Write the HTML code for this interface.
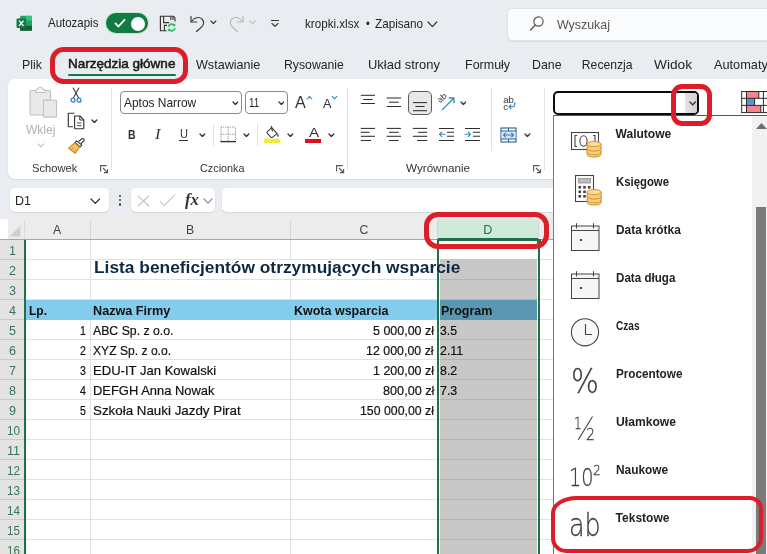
<!DOCTYPE html><html lang="pl"><head><meta charset="utf-8"><title>kropki.xlsx - Excel</title><style>

html,body{margin:0;padding:0;background:#fff;}
#app{position:relative;width:767px;height:554px;overflow:hidden;background:#e9ecf0;font-family:"Liberation Sans",sans-serif;}
.sec{position:absolute;left:0;top:0;width:767px;height:554px;pointer-events:none;will-change:transform;}
.b{position:absolute;box-sizing:border-box;display:block;}
.t{position:absolute;white-space:pre;line-height:1;transform-origin:0 0;font-family:"Liberation Sans",sans-serif;}

</style></head><body><div id="app">
<div class="sec" id="titlebar">
<div class="b" style="left:0px;top:0px;width:767px;height:47px;background:#e9ecf0;"></div>
<svg class="b" style="left:15.6px;top:15.3px;" width="16.8" height="16.6" viewBox="0 0 18 19">
<rect x="4" y="1" width="14" height="17" rx="1.5" fill="#21a366"/>
<rect x="11" y="1" width="7" height="5.7" fill="#33c481"/>
<rect x="4" y="6.7" width="7" height="5.6" fill="#107c41"/>
<rect x="11" y="6.7" width="7" height="5.6" fill="#21a366"/>
<rect x="4" y="12.3" width="14" height="5.7" fill="#185c37"/>
<rect x="0" y="4" width="11" height="11" rx="1.2" fill="#107c41"/>
<path d="M3 6.5 L8 12.5 M8 6.5 L3 12.5" stroke="#fff" stroke-width="1.6" fill="none"/>
</svg>
<span class="t" id="t0" style="top:18.33px;font-size:11.9px;color:#242424;left:48.2px;transform:scaleX(0.9649);">Autozapis</span>
<div class="b" style="left:105.6px;top:12.8px;width:42.6px;height:20px;background:#107c41;border-radius:10px;box-shadow:0 0 0 0.8px #bfe6d0;"></div>
<div class="b" style="left:131px;top:16.5px;width:14px;height:14px;background:#fff;border-radius:7px;"></div>
<svg class="b" style="left:114px;top:18px;" width="12" height="11" viewBox="0 0 12 11"><path d="M1.5 5.5 L4.5 8.5 L10.5 1.8" fill="none" stroke="#fff" stroke-width="1.8" stroke-linecap="round" stroke-linejoin="round"/></svg>
<svg class="b" style="left:159px;top:14px;" width="19" height="19" viewBox="0 0 19 19">
<path d="M16 7.6 V3.8 L14.4 2.2 H1.4 V16.7 H7.6" fill="none" stroke="#333" stroke-width="1.15" stroke-linejoin="round"/>
<path d="M4.6 2.2 V8.6 H10.2 M11.8 2.4 V6 M14 2.6 V6" fill="none" stroke="#333" stroke-width="1.1"/>
<path d="M5.4 16.7 V11.4 H8" fill="none" stroke="#333" stroke-width="1.1"/>
<circle cx="12.7" cy="13.5" r="4.4" fill="#d9f1e3"/>
<path d="M9.5 12.8 A3.3 3.3 0 0 1 15.4 11.4 M15.9 14.2 A3.3 3.3 0 0 1 10 15.6" fill="none" stroke="#37b26c" stroke-width="1.7"/>
<path d="M16.6 9.6 L16 12.4 L13.4 11.4 Z M8.8 17.4 L9.4 14.6 L12 15.6 Z" fill="#37b26c"/>
</svg>
<svg class="b" style="left:188px;top:13px;" width="19" height="20" viewBox="0 0 19 20">
<path d="M3 3.2 V9 H8.8" fill="none" stroke="#3b3b3b" stroke-width="1.15" stroke-linecap="round" stroke-linejoin="round"/>
<path d="M3.3 8.7 C6 4.5 11 3.2 14 6 C17 9 15.5 12.5 13 14.5 L8.5 18.5" fill="none" stroke="#3b3b3b" stroke-width="1.15" stroke-linecap="round"/>
</svg>
<svg class="b" style="left:210.29999999999998px;top:20.2px;" width="6.8" height="4.6" viewBox="0 0 6.8 4.6"><path d="M1 1 L3.4 3.6 L5.8 1" fill="none" stroke="#333" stroke-width="1.15" stroke-linecap="round" stroke-linejoin="round"/></svg>
<svg class="b" style="left:227px;top:13px;" width="19" height="20" viewBox="0 0 19 20">
<path d="M16 3.2 V9 H10.2" fill="none" stroke="#b4b6bb" stroke-width="1.15" stroke-linecap="round" stroke-linejoin="round"/>
<path d="M15.7 8.7 C13 4.5 8 3.2 5 6 C2 9 3.5 12.5 6 14.5 L10.5 18.5" fill="none" stroke="#b4b6bb" stroke-width="1.15" stroke-linecap="round"/>
</svg>
<svg class="b" style="left:249.0px;top:20.1px;" width="7" height="4.8" viewBox="0 0 7 4.8"><path d="M1 1 L3.5 3.8 L6 1" fill="none" stroke="#c4c6ca" stroke-width="1.3" stroke-linecap="round" stroke-linejoin="round"/></svg>
<svg class="b" style="left:270px;top:18px;" width="10" height="10" viewBox="0 0 10 10"><path d="M1.5 2.5 H8.5" stroke="#333" stroke-width="1.1" stroke-linecap="round"/><path d="M2 5.5 L5 8.3 L8 5.5" fill="none" stroke="#333" stroke-width="1.1" stroke-linecap="round" stroke-linejoin="round"/></svg>
<span class="t" id="t1" style="top:19.33px;font-size:11.9px;color:#242424;left:304.6px;transform:scaleX(0.9784);">kropki.xlsx</span>
<span class="t" id="t2" style="top:19.33px;font-size:11.9px;color:#242424;left:365.8px;transform:scaleX(0.9109);">•</span>
<span class="t" id="t3" style="top:19.33px;font-size:11.9px;color:#242424;left:374.5px;transform:scaleX(0.9832);">Zapisano</span>
<svg class="b" style="left:427.1px;top:21.3px;" width="10.8" height="6.6" viewBox="0 0 10.8 6.6"><path d="M1 1 L5.4 5.6 L9.8 1" fill="none" stroke="#333" stroke-width="1.2" stroke-linecap="round" stroke-linejoin="round"/></svg>
<div class="b" style="left:507px;top:8px;width:270px;height:33px;background:#fafbfc;border:1px solid #dfe1e6;border-radius:5px;box-shadow:0 1px 1px rgba(0,0,0,.08);"></div>
<svg class="b" style="left:529px;top:15px;" width="16" height="17" viewBox="0 0 16 17"><circle cx="9.5" cy="6.5" r="4.6" fill="none" stroke="#555" stroke-width="1.2"/><path d="M6.2 10 L1.5 15" stroke="#555" stroke-width="1.3" stroke-linecap="round"/></svg>
<span class="t" id="t4" style="top:18.90px;font-size:12.4px;color:#555;left:557px;">Wyszukaj</span>
</div>
<div class="sec" id="tabs">
<div class="b" style="left:0px;top:47px;width:767px;height:34px;background:#e9ecf0;"></div>
<span class="t" id="t5" style="top:59.07px;font-size:12.2px;color:#242424;left:22px;transform:scaleX(1.0183);">Plik</span>
<span class="t" id="t6" style="top:58.43px;font-size:12.6px;color:#1a1a1a;left:67.9px;transform:scaleX(1.0728);-webkit-text-stroke:0.5px #1a1a1a;">Narzędzia główne</span>
<span class="t" id="t7" style="top:59.07px;font-size:12.2px;color:#242424;left:196.3px;transform:scaleX(1.0319);">Wstawianie</span>
<span class="t" id="t8" style="top:59.07px;font-size:12.2px;color:#242424;left:283.5px;transform:scaleX(1.0046);">Rysowanie</span>
<span class="t" id="t9" style="top:59.07px;font-size:12.2px;color:#242424;left:367.8px;transform:scaleX(1.0630);">Układ strony</span>
<span class="t" id="t10" style="top:59.07px;font-size:12.2px;color:#242424;left:464.5px;transform:scaleX(1.0246);">Formuły</span>
<span class="t" id="t11" style="top:59.07px;font-size:12.2px;color:#242424;left:532.4px;transform:scaleX(1.0123);">Dane</span>
<span class="t" id="t12" style="top:59.07px;font-size:12.2px;color:#242424;left:581.8px;">Recenzja</span>
<span class="t" id="t13" style="top:59.07px;font-size:12.2px;color:#242424;left:653.7px;transform:scaleX(1.1218);">Widok</span>
<span class="t" id="t14" style="top:59.07px;font-size:12.2px;color:#242424;left:714.2px;transform:scaleX(1.0450);">Automaty</span>
<div class="b" style="left:67.5px;top:73.8px;width:108.3px;height:2.3px;background:#107c41;border-radius:1px;"></div>
</div>
<div class="sec" id="ribbon">
<div class="b" style="left:8px;top:78.7px;width:770px;height:100.8px;background:#fff;border-radius:7px 0 0 7px;box-shadow:0 1px 2px rgba(0,0,0,.10);"></div>
<div class="b" style="left:111px;top:88px;width:1px;height:82px;background:#e1e1e1;"></div>
<div class="b" style="left:347.3px;top:88px;width:1px;height:82px;background:#e1e1e1;"></div>
<div class="b" style="left:490.5px;top:88px;width:1px;height:63px;background:#e1e1e1;"></div>
<div class="b" style="left:544px;top:88px;width:1px;height:82px;background:#e1e1e1;"></div>
<svg class="b" style="left:27px;top:86px;" width="32" height="33" viewBox="0 0 32 33">
<path d="M3 5.5 Q3 4.5 4 4.5 H22.5 Q23.5 4.5 23.5 5.5 V14 H16.5 V29 H4 Q3 29 3 28 Z" fill="#e9e9e9" stroke="#c2c2c2" stroke-width="1.1"/>
<path d="M8.5 6.5 V4.5 Q8.5 3.5 9.5 3.5 H10.5 Q11 1.2 13.2 1.2 Q15.4 1.2 15.9 3.5 H17 Q18 3.5 18 4.5 V6.5 Z" fill="#f4f4f4" stroke="#c2c2c2" stroke-width="1.1"/>
<rect x="16.5" y="14.3" width="13" height="16.8" rx="0.8" fill="#e9e9e9" stroke="#c2c2c2" stroke-width="1.1"/>
</svg>
<span class="t" id="t15" style="top:123.59px;font-size:12.3px;color:#b2b2b2;left:26px;transform:scaleX(0.9746);">Wklej</span>
<svg class="b" style="left:36.75px;top:143.1px;" width="7.5" height="4.8" viewBox="0 0 7.5 4.8"><path d="M1 1 L3.75 3.8 L6.5 1" fill="none" stroke="#c4c4c4" stroke-width="1.1" stroke-linecap="round" stroke-linejoin="round"/></svg>
<svg class="b" style="left:69px;top:87px;" width="14" height="17" viewBox="0 0 14 17">
<path d="M4.2 1 L9.4 10.6 M9.8 1 L4.6 10.6" stroke="#3b3b3b" stroke-width="1.1" stroke-linecap="round"/>
<circle cx="4" cy="13.2" r="2" fill="none" stroke="#2b7cd3" stroke-width="1.2"/>
<circle cx="10" cy="13.2" r="2" fill="none" stroke="#2b7cd3" stroke-width="1.2"/>
</svg>
<svg class="b" style="left:67px;top:111px;" width="19" height="19" viewBox="0 0 19 19">
<path d="M7.5 2.2 H2 Q1.3 2.2 1.3 2.9 V15 Q1.3 15.7 2 15.7 H6" fill="none" stroke="#333" stroke-width="1.15"/>
<path d="M7.6 5 H13 L16.8 8.8 V17 Q16.8 17.7 16.1 17.7 H8.3 Q7.6 17.7 7.6 17 Z" fill="#fff" stroke="#333" stroke-width="1.15" stroke-linejoin="round"/>
<path d="M12.8 5.2 V9 H16.6" fill="none" stroke="#333" stroke-width="1"/>
<path d="M10 12 H14.5 M10 14.6 H14.5" stroke="#333" stroke-width="0.9"/>
</svg>
<svg class="b" style="left:90.89999999999999px;top:118.95px;" width="6.8" height="4.5" viewBox="0 0 6.8 4.5"><path d="M1 1 L3.4 3.5 L5.8 1" fill="none" stroke="#333" stroke-width="1.3" stroke-linecap="round" stroke-linejoin="round"/></svg>
<svg class="b" style="left:67px;top:137px;" width="19" height="18" viewBox="0 0 19 18">
<path d="M11.5 4.5 L15 1.8 Q16.2 1.2 17 2.2 Q17.6 3.2 16.8 4 L13.5 7" fill="#fff" stroke="#3b3b3b" stroke-width="1.1" stroke-linejoin="round"/>
<path d="M9.5 3.8 L14.8 8.2 L13.2 10 L8 5.6 Z" fill="#fff" stroke="#3b3b3b" stroke-width="1.1" stroke-linejoin="round"/>
<path d="M7.6 6 L12.6 10.2 L8.2 16.4 L1.6 11.2 Z" fill="#f6c56f" stroke="#d08a1e" stroke-width="1.1" stroke-linejoin="round"/>
<path d="M4.2 13.2 L6.2 10.4 M6.6 15 L8.6 12.2" stroke="#d08a1e" stroke-width="0.9"/>
</svg>
<span class="t" id="t16" style="top:163.41px;font-size:11.8px;color:#333;left:31.5px;transform:scaleX(0.9462);">Schowek</span>
<svg class="b" style="left:99.8px;top:165px;" width="8.5" height="8.5" viewBox="0 0 8.5 8.5"><path d="M0.6 6.6 V0.6 H6.6" fill="none" stroke="#555" stroke-width="1.1"/><path d="M3 3 L7.6 7.6 M7.6 4 V7.6 H4" fill="none" stroke="#555" stroke-width="1.1"/></svg>
<div class="b" style="left:120px;top:91px;width:122px;height:23.3px;background:#fff;border:1px solid #8a8a8a;border-radius:4px;"></div>
<span class="t" id="t17" style="top:97.10px;font-size:12.4px;color:#242424;left:123.8px;transform:scaleX(0.9619);">Aptos Narrow</span>
<svg class="b" style="left:231.6px;top:100.75px;" width="6.8" height="4.5" viewBox="0 0 6.8 4.5"><path d="M1 1 L3.4 3.5 L5.8 1" fill="none" stroke="#333" stroke-width="1.3" stroke-linecap="round" stroke-linejoin="round"/></svg>
<div class="b" style="left:245px;top:91px;width:43px;height:23.3px;background:#fff;border:1px solid #8a8a8a;border-radius:4px;"></div>
<span class="t" id="t18" style="top:97.10px;font-size:12.4px;color:#242424;left:249.2px;transform:scaleX(0.7922);">11</span>
<svg class="b" style="left:277.6px;top:100.75px;" width="6.8" height="4.5" viewBox="0 0 6.8 4.5"><path d="M1 1 L3.4 3.5 L5.8 1" fill="none" stroke="#333" stroke-width="1.3" stroke-linecap="round" stroke-linejoin="round"/></svg>
<span class="t" id="t19" style="top:94.03px;font-size:16.5px;color:#333;left:295.2px;transform:scaleX(0.9804);">A</span>
<svg class="b" style="left:305.5px;top:94.5px;" width="7" height="5.5" viewBox="0 0 7 5.5"><path d="M1.2 4 L3.5 1.4 L5.8 4" fill="none" stroke="#2b8ac0" stroke-width="1.1" stroke-linecap="round" stroke-linejoin="round"/></svg>
<span class="t" id="t20" style="top:97.00px;font-size:13px;color:#333;left:322.8px;transform:scaleX(0.9802);">A</span>
<svg class="b" style="left:330.5px;top:94.5px;" width="7" height="5.5" viewBox="0 0 7 5.5"><path d="M1.2 1.4 L3.5 4 L5.8 1.4" fill="none" stroke="#2b8ac0" stroke-width="1.1" stroke-linecap="round" stroke-linejoin="round"/></svg>
<span class="t" id="t21" style="top:127.86px;font-size:13.4px;font-weight:700;color:#333;left:128.4px;transform:scaleX(0.7858);">B</span>
<span class="t" id="t22" style="top:127.76px;font-size:13.8px;color:#333;font-family:'Liberation Serif', serif;font-style:italic;left:155px;transform:scaleX(1.1932);">I</span>
<span class="t" id="t23" style="top:128.07px;font-size:12.2px;color:#333;left:179.6px;transform:scaleX(0.9078);">U</span>
<div class="b" style="left:179.4px;top:139.6px;width:8.6px;height:1.1px;background:#333;"></div>
<svg class="b" style="left:199.2px;top:132.55px;" width="6.8" height="4.5" viewBox="0 0 6.8 4.5"><path d="M1 1 L3.4 3.5 L5.8 1" fill="none" stroke="#333" stroke-width="1.3" stroke-linecap="round" stroke-linejoin="round"/></svg>
<div class="b" style="left:213px;top:124px;width:1px;height:22px;background:#e1e1e1;"></div>
<svg class="b" style="left:219.5px;top:126px;" width="17" height="17" viewBox="0 0 17 17">
<path d="M1 1 H15.5 V15.5 H1 Z" fill="none" stroke="#8a8a8a" stroke-width="1" stroke-dasharray="1.1 1.1"/>
<path d="M8.2 1 V15.5 M1 8.2 H15.5" stroke="#8a8a8a" stroke-width="1" stroke-dasharray="1.1 1.1"/>
<path d="M0.5 15.6 H16" stroke="#333" stroke-width="1.4"/>
</svg>
<svg class="b" style="left:243.0px;top:132.55px;" width="6.8" height="4.5" viewBox="0 0 6.8 4.5"><path d="M1 1 L3.4 3.5 L5.8 1" fill="none" stroke="#333" stroke-width="1.3" stroke-linecap="round" stroke-linejoin="round"/></svg>
<div class="b" style="left:257.3px;top:124px;width:1px;height:22px;background:#e1e1e1;"></div>
<svg class="b" style="left:263px;top:125px;" width="20" height="20" viewBox="0 0 20 20">
<path d="M8.8 2.6 L14 8.6 L9.4 12.4 Q8.6 13 7.8 12.2 L4.2 8.2 Q3.6 7.4 4.4 6.6 Z" fill="#fff" stroke="#3b3b3b" stroke-width="1.1" stroke-linejoin="round"/>
<path d="M8.2 1.4 L9.4 6" stroke="#3b3b3b" stroke-width="1.1" stroke-linecap="round"/>
<path d="M14.6 8 Q16.6 10.6 15.4 11.8 Q14.2 12.4 13.8 10.6 Z" fill="#2b7cb0"/>
<rect x="1.1" y="13.7" width="16.3" height="4.5" fill="#ecec3c"/>
</svg>
<svg class="b" style="left:287.3px;top:132.55px;" width="6.8" height="4.5" viewBox="0 0 6.8 4.5"><path d="M1 1 L3.4 3.5 L5.8 1" fill="none" stroke="#333" stroke-width="1.3" stroke-linecap="round" stroke-linejoin="round"/></svg>
<span class="t" id="t24" style="top:126.23px;font-size:13.2px;color:#333;left:308.6px;transform:scaleX(1.1481);">A</span>
<div class="b" style="left:304.6px;top:138.7px;width:16.2px;height:4.2px;background:#e00b1c;"></div>
<svg class="b" style="left:328.20000000000005px;top:132.55px;" width="6.8" height="4.5" viewBox="0 0 6.8 4.5"><path d="M1 1 L3.4 3.5 L5.8 1" fill="none" stroke="#333" stroke-width="1.3" stroke-linecap="round" stroke-linejoin="round"/></svg>
<span class="t" id="t25" style="top:163.41px;font-size:11.8px;color:#333;left:199.8px;transform:scaleX(0.9169);">Czcionka</span>
<svg class="b" style="left:336px;top:165px;" width="8.5" height="8.5" viewBox="0 0 8.5 8.5"><path d="M0.6 6.6 V0.6 H6.6" fill="none" stroke="#555" stroke-width="1.1"/><path d="M3 3 L7.6 7.6 M7.6 4 V7.6 H4" fill="none" stroke="#555" stroke-width="1.1"/></svg>
<svg class="b" style="left:360px;top:93px;" width="16" height="16" viewBox="0 0 16 16"><path d="M0.8 2.3 H15" stroke="#2e2e2e" stroke-width="1.05"/><path d="M3.2 6.5 H12.6" stroke="#2e2e2e" stroke-width="1.05"/><path d="M0.8 10.5 H15" stroke="#2e2e2e" stroke-width="1.05"/></svg>
<svg class="b" style="left:386px;top:95px;" width="16" height="16" viewBox="0 0 16 16"><path d="M0.6 3 H15" stroke="#2e2e2e" stroke-width="1.05"/><path d="M3 7.2 H12.6" stroke="#2e2e2e" stroke-width="1.05"/><path d="M0.6 11.5 H15" stroke="#2e2e2e" stroke-width="1.05"/></svg>
<div class="b" style="left:408.3px;top:91.2px;width:23.4px;height:23.5px;background:#e8e8e8;border:1.2px solid #5a5a5a;border-radius:5px;"></div>
<svg class="b" style="left:412px;top:98px;" width="16" height="16" viewBox="0 0 16 16"><path d="M1 4.6 H15" stroke="#2e2e2e" stroke-width="1.05"/><path d="M3.4 8.5 H12.6" stroke="#2e2e2e" stroke-width="1.05"/><path d="M1 12.7 H15" stroke="#2e2e2e" stroke-width="1.05"/></svg>
<svg class="b" style="left:437px;top:92px;" width="20" height="20" viewBox="0 0 20 20">
<text x="0" y="0" font-family="Liberation Sans, sans-serif" font-size="8.6" fill="#333" transform="translate(3.2 11.2) rotate(-42)">ab</text>
<path d="M5.5 17.5 L17 6 M17 6 H12.2 M17 6 V10.8" fill="none" stroke="#2f93b8" stroke-width="1.3" stroke-linecap="round" stroke-linejoin="round"/>
</svg>
<svg class="b" style="left:459.6px;top:100.75px;" width="6.8" height="4.5" viewBox="0 0 6.8 4.5"><path d="M1 1 L3.4 3.5 L5.8 1" fill="none" stroke="#333" stroke-width="1.3" stroke-linecap="round" stroke-linejoin="round"/></svg>
<svg class="b" style="left:360px;top:126px;" width="16" height="16" viewBox="0 0 16 16"><path d="M0.8 2.4 H15" stroke="#2e2e2e" stroke-width="1.05"/><path d="M0.8 6.3 H9.5" stroke="#2e2e2e" stroke-width="1.05"/><path d="M0.8 10.3 H15" stroke="#2e2e2e" stroke-width="1.05"/><path d="M0.8 14.5 H11" stroke="#2e2e2e" stroke-width="1.05"/></svg>
<svg class="b" style="left:386px;top:126px;" width="16" height="16" viewBox="0 0 16 16"><path d="M0.6 2.4 H15" stroke="#2e2e2e" stroke-width="1.05"/><path d="M3 6.3 H12.6" stroke="#2e2e2e" stroke-width="1.05"/><path d="M0.6 10.3 H15" stroke="#2e2e2e" stroke-width="1.05"/><path d="M3 14.5 H12.6" stroke="#2e2e2e" stroke-width="1.05"/></svg>
<svg class="b" style="left:412px;top:126px;" width="16" height="16" viewBox="0 0 16 16"><path d="M0.8 2.4 H15.2" stroke="#2e2e2e" stroke-width="1.05"/><path d="M6 6.3 H15.2" stroke="#2e2e2e" stroke-width="1.05"/><path d="M0.8 10.3 H15.2" stroke="#2e2e2e" stroke-width="1.05"/><path d="M5 14.5 H15.2" stroke="#2e2e2e" stroke-width="1.05"/></svg>
<svg class="b" style="left:437.5px;top:126px;" width="17" height="16" viewBox="0 0 17 16">
<path d="M1 2.4 H16 M9 6.3 H16 M9 10.3 H16 M1 14.5 H16" stroke="#2e2e2e" stroke-width="1.05"/>
<path d="M7 8.3 H1.5 M3.8 6 L1.5 8.3 L3.8 10.6" fill="none" stroke="#2f93b8" stroke-width="1.1" stroke-linecap="round" stroke-linejoin="round"/>
</svg>
<svg class="b" style="left:463.5px;top:126px;" width="17" height="16" viewBox="0 0 17 16">
<path d="M1 2.4 H16 M9 6.3 H16 M9 10.3 H16 M1 14.5 H16" stroke="#2e2e2e" stroke-width="1.05"/>
<path d="M1 8.3 H6.5 M4.2 6 L6.5 8.3 L4.2 10.6" fill="none" stroke="#2f93b8" stroke-width="1.1" stroke-linecap="round" stroke-linejoin="round"/>
</svg>
<svg class="b" style="left:502px;top:94px;" width="16" height="18" viewBox="0 0 16 18">
<text x="1.2" y="8.6" font-family="Liberation Sans, sans-serif" font-size="9.6" fill="#333">ab</text>
<text x="1.2" y="15.6" font-family="Liberation Sans, sans-serif" font-size="9.6" fill="#333">c</text>
<path d="M12.8 8.6 V10.6 Q12.8 12.8 10.8 12.8 H7 M9 10.8 L7 12.8 L9 14.8" fill="none" stroke="#2b7cd3" stroke-width="1.1" stroke-linecap="round" stroke-linejoin="round"/>
</svg>
<svg class="b" style="left:500px;top:126.5px;" width="17" height="16" viewBox="0 0 17 16">
<rect x="1" y="1" width="15" height="14" fill="#fff" stroke="#2a5f8c" stroke-width="1.1"/><rect x="1.5" y="4.5" width="14" height="7" fill="#d3e6f5"/>
<path d="M1 4 H16 M1 12 H16 M8.5 1 V4 M8.5 12 V15" stroke="#2a5f8c" stroke-width="1"/>
<path d="M3.6 8 H13.4 M5.4 6.2 L3.6 8 L5.4 9.8 M11.6 6.2 L13.4 8 L11.6 9.8" fill="none" stroke="#2b7cd3" stroke-width="1.1" stroke-linecap="round" stroke-linejoin="round"/>
</svg>
<svg class="b" style="left:524.2px;top:132.75px;" width="6.8" height="4.5" viewBox="0 0 6.8 4.5"><path d="M1 1 L3.4 3.5 L5.8 1" fill="none" stroke="#333" stroke-width="1.3" stroke-linecap="round" stroke-linejoin="round"/></svg>
<span class="t" id="t26" style="top:163.41px;font-size:11.8px;color:#333;left:406.4px;transform:scaleX(0.9890);">Wyrównanie</span>
<svg class="b" style="left:532.8px;top:165px;" width="8.5" height="8.5" viewBox="0 0 8.5 8.5"><path d="M0.6 6.6 V0.6 H6.6" fill="none" stroke="#555" stroke-width="1.1"/><path d="M3 3 L7.6 7.6 M7.6 4 V7.6 H4" fill="none" stroke="#555" stroke-width="1.1"/></svg>
<div class="b" style="left:553px;top:91px;width:146px;height:24.1px;background:#fff;border:2.1px solid #0c0c0c;border-radius:5px;"></div>
<div class="b" style="left:685.2px;top:93.1px;width:11.7px;height:19.9px;background:linear-gradient(90deg,#e2e2e2,#d2d2d2);border-radius:0 3px 3px 0;"></div>
<svg class="b" style="left:688.5px;top:100.85px;" width="7.4" height="4.9" viewBox="0 0 7.4 4.9"><path d="M1 1 L3.7 3.9 L6.4 1" fill="none" stroke="#333" stroke-width="1.4" stroke-linecap="round" stroke-linejoin="round"/></svg>
<svg class="b" style="left:740px;top:90px;" width="28" height="24" viewBox="0 0 28 24">
<rect x="1.7" y="1.5" width="27" height="21.6" fill="#fff"/>
<rect x="6.5" y="1.5" width="12.3" height="6.8" fill="#f5828d"/>
<rect x="6.5" y="8.3" width="8.1" height="7.1" fill="#5a96d0"/>
<rect x="6.5" y="15.4" width="14.3" height="7.2" fill="#f5828d"/>
<path d="M1.7 1.5 H28 M1.7 8.3 H28 M1.7 15.4 H28 M1.7 22.6 H28 M1.7 1 V23.1 M6.5 1.5 V22.6 M18.8 1.5 V8.3 M14.6 8.3 V15.4 M20.8 15.4 V22.6 M23.4 1.5 V22.6" fill="none" stroke="#2a2a2a" stroke-width="1"/>
</svg>
</div>
<div class="sec" id="formulabar">
<div class="b" style="left:0px;top:179.5px;width:767px;height:40px;background:#e9ecf0;"></div>
<div class="b" style="left:9.5px;top:188px;width:99.3px;height:24px;background:#fff;border-radius:5px;box-shadow:0 0.6px 0 0.4px #d5d8dc;"></div>
<span class="t" id="t27" style="top:194.73px;font-size:12.6px;color:#242424;left:15px;transform:scaleX(0.9932);">D1</span>
<svg class="b" style="left:89.7px;top:197.60000000000002px;" width="10.6" height="6.4" viewBox="0 0 10.6 6.4"><path d="M1 1 L5.3 5.4 L9.6 1" fill="none" stroke="#333" stroke-width="1.3" stroke-linecap="round" stroke-linejoin="round"/></svg>
<div class="b" style="left:118.7px;top:194.6px;width:2.3px;height:2.3px;background:#444;border-radius:2px;"></div>
<div class="b" style="left:118.7px;top:198.9px;width:2.3px;height:2.3px;background:#444;border-radius:2px;"></div>
<div class="b" style="left:118.7px;top:203.4px;width:2.3px;height:2.3px;background:#444;border-radius:2px;"></div>
<div class="b" style="left:131px;top:188px;width:84.3px;height:24px;background:#fff;border-radius:5px;box-shadow:0 0.6px 0 0.4px #d5d8dc;"></div>
<svg class="b" style="left:137px;top:195px;" width="13" height="12" viewBox="0 0 13 12"><path d="M1 1 L12 11 M12 1 L1 11" stroke="#c6c6c6" stroke-width="1.1" stroke-linecap="round"/></svg>
<svg class="b" style="left:158.5px;top:193.5px;" width="17" height="13" viewBox="0 0 17 13"><path d="M1.2 7.4 L5.2 11.6 L15.8 1.2" fill="none" stroke="#c6c6c6" stroke-width="1.1" stroke-linecap="round" stroke-linejoin="round"/></svg>
<span class="t" id="t28" style="top:191.80px;font-size:16.5px;font-weight:700;color:#333;font-family:'Liberation Serif', serif;font-style:italic;left:184.5px;transform:scaleX(1.0109);">fx</span>
<svg class="b" style="left:203.4px;top:197.6px;" width="10" height="6.2" viewBox="0 0 10 6.2"><path d="M1 1 L5.0 5.2 L9 1" fill="none" stroke="#8c8c8c" stroke-width="1.2" stroke-linecap="round" stroke-linejoin="round"/></svg>
<div class="b" style="left:221.5px;top:188px;width:332px;height:24px;background:#fff;border-radius:5px 0 0 5px;box-shadow:0 0.6px 0 0.4px #d5d8dc;"></div>
</div>
<div class="sec" id="grid">
<div class="b" style="left:0px;top:219px;width:553px;height:335px;background:#fff;"></div>
<div class="b" style="left:8px;top:212.6px;width:545px;height:27px;background:#ececec;"></div>
<div class="b" style="left:0px;top:238.8px;width:553px;height:1px;background:#a6a6a6;"></div>
<svg class="b" style="left:8px;top:224px;" width="14" height="14" viewBox="0 0 14 14"><path d="M12.5 1.5 V12.5 H1.5 Z" fill="#d0d0d0"/></svg>
<div class="b" style="left:24px;top:221px;width:1px;height:18px;background:#d9d9d9;"></div>
<span class="t" id="t29" style="top:223.99px;font-size:12.3px;color:#444;left:53.0px;">A</span>
<div class="b" style="left:90px;top:221px;width:1px;height:18px;background:#d4d4d4;"></div>
<span class="t" id="t30" style="top:223.99px;font-size:12.3px;color:#444;left:186.0px;">B</span>
<div class="b" style="left:290px;top:221px;width:1px;height:18px;background:#d4d4d4;"></div>
<span class="t" id="t31" style="top:223.99px;font-size:12.3px;color:#444;left:359.5px;">C</span>
<div class="b" style="left:437px;top:221px;width:1px;height:18px;background:#d4d4d4;"></div>
<div class="b" style="left:438px;top:219px;width:100px;height:20px;background:#cfe9da;"></div>
<div class="b" style="left:438px;top:238px;width:100px;height:2px;background:#1e7145;"></div>
<span class="t" id="t32" style="top:223.73px;font-size:12.6px;color:#1e7145;left:483.3px;">D</span>
<div class="b" style="left:538px;top:221px;width:1px;height:18px;background:#d4d4d4;"></div>
<div class="b" style="left:0px;top:240px;width:24px;height:314px;background:#e3e3e3;"></div>
<div class="b" style="left:24px;top:240px;width:2px;height:314px;background:#1e7145;"></div>
<span class="t" id="t33" style="top:244.63px;font-size:12.6px;color:#3a7554;left:9.0px;">1</span>
<div class="b" style="left:0px;top:259px;width:24px;height:1px;background:#c9cacc;"></div>
<span class="t" id="t34" style="top:264.63px;font-size:12.6px;color:#3a7554;left:9.0px;">2</span>
<div class="b" style="left:0px;top:279px;width:24px;height:1px;background:#c9cacc;"></div>
<span class="t" id="t35" style="top:284.63px;font-size:12.6px;color:#3a7554;left:9.0px;">3</span>
<div class="b" style="left:0px;top:299px;width:24px;height:1px;background:#c9cacc;"></div>
<span class="t" id="t36" style="top:304.63px;font-size:12.6px;color:#3a7554;left:9.0px;">4</span>
<div class="b" style="left:0px;top:319px;width:24px;height:1px;background:#c9cacc;"></div>
<span class="t" id="t37" style="top:324.63px;font-size:12.6px;color:#3a7554;left:9.0px;">5</span>
<div class="b" style="left:0px;top:339px;width:24px;height:1px;background:#c9cacc;"></div>
<span class="t" id="t38" style="top:344.63px;font-size:12.6px;color:#3a7554;left:9.0px;">6</span>
<div class="b" style="left:0px;top:359px;width:24px;height:1px;background:#c9cacc;"></div>
<span class="t" id="t39" style="top:364.63px;font-size:12.6px;color:#3a7554;left:9.0px;">7</span>
<div class="b" style="left:0px;top:379px;width:24px;height:1px;background:#c9cacc;"></div>
<span class="t" id="t40" style="top:384.63px;font-size:12.6px;color:#3a7554;left:9.0px;">8</span>
<div class="b" style="left:0px;top:399px;width:24px;height:1px;background:#c9cacc;"></div>
<span class="t" id="t41" style="top:404.63px;font-size:12.6px;color:#3a7554;left:9.0px;">9</span>
<div class="b" style="left:0px;top:419px;width:24px;height:1px;background:#c9cacc;"></div>
<span class="t" id="t42" style="top:424.63px;font-size:12.6px;color:#3a7554;left:7.3px;transform:scaleX(0.9275);">10</span>
<div class="b" style="left:0px;top:439px;width:24px;height:1px;background:#c9cacc;"></div>
<span class="t" id="t43" style="top:444.63px;font-size:12.6px;color:#3a7554;left:7.3px;transform:scaleX(0.9940);">11</span>
<div class="b" style="left:0px;top:459px;width:24px;height:1px;background:#c9cacc;"></div>
<span class="t" id="t44" style="top:464.63px;font-size:12.6px;color:#3a7554;left:7.3px;transform:scaleX(0.9275);">12</span>
<div class="b" style="left:0px;top:479px;width:24px;height:1px;background:#c9cacc;"></div>
<span class="t" id="t45" style="top:484.63px;font-size:12.6px;color:#3a7554;left:7.3px;transform:scaleX(0.9275);">13</span>
<div class="b" style="left:0px;top:499px;width:24px;height:1px;background:#c9cacc;"></div>
<span class="t" id="t46" style="top:504.63px;font-size:12.6px;color:#3a7554;left:7.3px;transform:scaleX(0.9275);">14</span>
<div class="b" style="left:0px;top:519px;width:24px;height:1px;background:#c9cacc;"></div>
<span class="t" id="t47" style="top:524.63px;font-size:12.6px;color:#3a7554;left:7.3px;transform:scaleX(0.9275);">15</span>
<div class="b" style="left:0px;top:539px;width:24px;height:1px;background:#c9cacc;"></div>
<span class="t" id="t48" style="top:544.63px;font-size:12.6px;color:#3a7554;left:7.3px;transform:scaleX(0.9275);">16</span>
<div class="b" style="left:0px;top:559px;width:24px;height:1px;background:#c9cacc;"></div>
<div class="b" style="left:26px;top:259px;width:527px;height:1px;background:#e1e1e1;"></div>
<div class="b" style="left:26px;top:279px;width:527px;height:1px;background:#e1e1e1;"></div>
<div class="b" style="left:26px;top:299px;width:527px;height:1px;background:#e1e1e1;"></div>
<div class="b" style="left:26px;top:319px;width:527px;height:1px;background:#e1e1e1;"></div>
<div class="b" style="left:26px;top:339px;width:527px;height:1px;background:#e1e1e1;"></div>
<div class="b" style="left:26px;top:359px;width:527px;height:1px;background:#e1e1e1;"></div>
<div class="b" style="left:26px;top:379px;width:527px;height:1px;background:#e1e1e1;"></div>
<div class="b" style="left:26px;top:399px;width:527px;height:1px;background:#e1e1e1;"></div>
<div class="b" style="left:26px;top:419px;width:527px;height:1px;background:#e1e1e1;"></div>
<div class="b" style="left:26px;top:439px;width:527px;height:1px;background:#e1e1e1;"></div>
<div class="b" style="left:26px;top:459px;width:527px;height:1px;background:#e1e1e1;"></div>
<div class="b" style="left:26px;top:479px;width:527px;height:1px;background:#e1e1e1;"></div>
<div class="b" style="left:26px;top:499px;width:527px;height:1px;background:#e1e1e1;"></div>
<div class="b" style="left:26px;top:519px;width:527px;height:1px;background:#e1e1e1;"></div>
<div class="b" style="left:26px;top:539px;width:527px;height:1px;background:#e1e1e1;"></div>
<div class="b" style="left:26px;top:559px;width:527px;height:1px;background:#e1e1e1;"></div>
<div class="b" style="left:90px;top:240px;width:1px;height:314px;background:#e1e1e1;"></div>
<div class="b" style="left:290px;top:240px;width:1px;height:314px;background:#e1e1e1;"></div>
<div class="b" style="left:437px;top:240px;width:1px;height:314px;background:#e1e1e1;"></div>
<div class="b" style="left:538px;top:240px;width:1px;height:314px;background:#e1e1e1;"></div>
<div class="b" style="left:91px;top:260px;width:346px;height:19px;background:#fff;"></div>
<div class="b" style="left:26px;top:300px;width:412px;height:20px;background:#83cceb;"></div>
<div class="b" style="left:439.5px;top:259px;width:97.5px;height:295px;background:#c8c8c8;"></div>
<div class="b" style="left:439.5px;top:279px;width:97.5px;height:1px;background:#b4b4b4;"></div>
<div class="b" style="left:439.5px;top:299px;width:97.5px;height:1px;background:#b4b4b4;"></div>
<div class="b" style="left:439.5px;top:319px;width:97.5px;height:1px;background:#b4b4b4;"></div>
<div class="b" style="left:439.5px;top:339px;width:97.5px;height:1px;background:#b4b4b4;"></div>
<div class="b" style="left:439.5px;top:359px;width:97.5px;height:1px;background:#b4b4b4;"></div>
<div class="b" style="left:439.5px;top:379px;width:97.5px;height:1px;background:#b4b4b4;"></div>
<div class="b" style="left:439.5px;top:399px;width:97.5px;height:1px;background:#b4b4b4;"></div>
<div class="b" style="left:439.5px;top:419px;width:97.5px;height:1px;background:#b4b4b4;"></div>
<div class="b" style="left:439.5px;top:439px;width:97.5px;height:1px;background:#b4b4b4;"></div>
<div class="b" style="left:439.5px;top:459px;width:97.5px;height:1px;background:#b4b4b4;"></div>
<div class="b" style="left:439.5px;top:479px;width:97.5px;height:1px;background:#b4b4b4;"></div>
<div class="b" style="left:439.5px;top:499px;width:97.5px;height:1px;background:#b4b4b4;"></div>
<div class="b" style="left:439.5px;top:519px;width:97.5px;height:1px;background:#b4b4b4;"></div>
<div class="b" style="left:439.5px;top:539px;width:97.5px;height:1px;background:#b4b4b4;"></div>
<div class="b" style="left:439.5px;top:559px;width:97.5px;height:1px;background:#b4b4b4;"></div>
<div class="b" style="left:439.5px;top:300px;width:97.5px;height:20px;background:#5b97b3;"></div>
<div class="b" style="left:436.5px;top:238.5px;width:2px;height:316px;background:#1e7145;"></div>
<div class="b" style="left:537.8px;top:238.5px;width:2px;height:316px;background:#1e7145;"></div>
<div class="b" style="left:436.5px;top:238.5px;width:103px;height:2.2px;background:#1e7145;"></div>
<div class="b" style="left:536.5px;top:239px;width:4px;height:4px;background:#1e7145;"></div>
<span class="t" id="t49" style="top:260.36px;font-size:16px;font-weight:700;color:#0e2841;left:93.5px;transform:scaleX(1.0841);">Lista beneficjentów otrzymujących wsparcie</span>
<span class="t" id="t50" style="top:304.85px;font-size:12.7px;font-weight:700;color:#111;left:28.6px;transform:scaleX(0.9458);">Lp.</span>
<span class="t" id="t51" style="top:304.85px;font-size:12.7px;font-weight:700;color:#111;left:92.7px;transform:scaleX(0.9966);">Nazwa Firmy</span>
<span class="t" id="t52" style="top:304.85px;font-size:12.7px;font-weight:700;color:#111;left:293.8px;transform:scaleX(0.9843);">Kwota wsparcia</span>
<span class="t" id="t53" style="top:304.85px;font-size:12.7px;font-weight:700;color:#111;left:440.7px;transform:scaleX(0.9830);">Program</span>
<span class="t" id="t54" style="top:323.59px;font-size:13.6px;color:#111;left:80.3px;transform:scaleX(0.7802);-webkit-text-stroke:0.2px #111;">1</span>
<span class="t" id="t55" style="top:323.59px;font-size:13.6px;color:#111;left:92.5px;transform:scaleX(0.9029);-webkit-text-stroke:0.2px #111;">ABC Sp. z o.o.</span>
<span class="t" id="t56" style="top:323.59px;font-size:13.6px;color:#111;left:373px;transform:scaleX(0.9171);-webkit-text-stroke:0.2px #111;">5 000,00 zł</span>
<span class="t" id="t57" style="top:323.59px;font-size:13.6px;color:#111;left:440.3px;transform:scaleX(0.8992);-webkit-text-stroke:0.2px #111;">3.5</span>
<span class="t" id="t58" style="top:343.59px;font-size:13.6px;color:#111;left:80.3px;transform:scaleX(0.7802);-webkit-text-stroke:0.2px #111;">2</span>
<span class="t" id="t59" style="top:343.59px;font-size:13.6px;color:#111;left:92.5px;transform:scaleX(0.8910);-webkit-text-stroke:0.2px #111;">XYZ Sp. z o.o.</span>
<span class="t" id="t60" style="top:343.59px;font-size:13.6px;color:#111;left:366.4px;transform:scaleX(0.9126);-webkit-text-stroke:0.2px #111;">12 000,00 zł</span>
<span class="t" id="t61" style="top:343.59px;font-size:13.6px;color:#111;left:440.3px;transform:scaleX(0.9115);-webkit-text-stroke:0.2px #111;">2.11</span>
<span class="t" id="t62" style="top:363.59px;font-size:13.6px;color:#111;left:80.3px;transform:scaleX(0.7802);-webkit-text-stroke:0.2px #111;">3</span>
<span class="t" id="t63" style="top:363.59px;font-size:13.6px;color:#111;left:92.5px;transform:scaleX(0.9612);-webkit-text-stroke:0.2px #111;">EDU-IT Jan Kowalski</span>
<span class="t" id="t64" style="top:363.59px;font-size:13.6px;color:#111;left:373px;transform:scaleX(0.9171);-webkit-text-stroke:0.2px #111;">1 200,00 zł</span>
<span class="t" id="t65" style="top:363.59px;font-size:13.6px;color:#111;left:440.3px;transform:scaleX(0.9098);-webkit-text-stroke:0.2px #111;">8.2</span>
<span class="t" id="t66" style="top:383.59px;font-size:13.6px;color:#111;left:80.3px;transform:scaleX(0.7802);-webkit-text-stroke:0.2px #111;">4</span>
<span class="t" id="t67" style="top:383.59px;font-size:13.6px;color:#111;left:92.5px;transform:scaleX(0.9515);-webkit-text-stroke:0.2px #111;">DEFGH Anna Nowak</span>
<span class="t" id="t68" style="top:383.59px;font-size:13.6px;color:#111;left:382.6px;transform:scaleX(0.9316);-webkit-text-stroke:0.2px #111;">800,00 zł</span>
<span class="t" id="t69" style="top:383.59px;font-size:13.6px;color:#111;left:440.3px;transform:scaleX(0.9150);-webkit-text-stroke:0.2px #111;">7.3</span>
<span class="t" id="t70" style="top:403.59px;font-size:13.6px;color:#111;left:80.3px;transform:scaleX(0.7802);-webkit-text-stroke:0.2px #111;">5</span>
<span class="t" id="t71" style="top:403.59px;font-size:13.6px;color:#111;left:92.5px;transform:scaleX(0.9823);-webkit-text-stroke:0.2px #111;">Szkoła Nauki Jazdy Pirat</span>
<span class="t" id="t72" style="top:403.59px;font-size:13.6px;color:#111;left:360.1px;transform:scaleX(0.9052);-webkit-text-stroke:0.2px #111;">150 000,00 zł</span>
</div>
<div class="sec" id="dropdown">
<div class="b" style="left:552.8px;top:114.8px;width:215px;height:441px;background:#fff;border-left:1.2px solid #7a7a7a;border-top:1px solid #555;"></div>
<span class="t" id="t73" style="top:128.14px;font-size:12px;font-weight:700;color:#222;left:615.6px;">Walutowe</span>
<span class="t" id="t74" style="top:176.14px;font-size:12px;font-weight:700;color:#222;left:615.6px;transform:scaleX(0.9462);">Księgowe</span>
<span class="t" id="t75" style="top:224.14px;font-size:12px;font-weight:700;color:#222;left:615.6px;transform:scaleX(0.9912);">Data krótka</span>
<span class="t" id="t76" style="top:272.14px;font-size:12px;font-weight:700;color:#222;left:615.6px;transform:scaleX(0.9683);">Data długa</span>
<span class="t" id="t77" style="top:320.14px;font-size:12px;font-weight:700;color:#222;left:615.6px;transform:scaleX(0.8424);">Czas</span>
<span class="t" id="t78" style="top:368.14px;font-size:12px;font-weight:700;color:#222;left:615.6px;transform:scaleX(0.9762);">Procentowe</span>
<span class="t" id="t79" style="top:416.14px;font-size:12px;font-weight:700;color:#222;left:615.6px;transform:scaleX(1.0108);">Ułamkowe</span>
<span class="t" id="t80" style="top:464.14px;font-size:12px;font-weight:700;color:#222;left:615.6px;transform:scaleX(0.9888);">Naukowe</span>
<span class="t" id="t81" style="top:512.14px;font-size:12px;font-weight:700;color:#222;left:615.6px;">Tekstowe</span>
<svg class="b" style="left:568px;top:128px;" width="36" height="32" viewBox="0 0 36 32">
<rect x="3.5" y="4.5" width="27" height="17" fill="#fff" stroke="#444" stroke-width="1.1"/>
<path d="M9 7.5 H7 V18.5 H9 M25 7.5 H27 V18.5 H25" fill="none" stroke="#444" stroke-width="1.1"/>
<ellipse cx="15.5" cy="13" rx="3.6" ry="5.2" fill="none" stroke="#444" stroke-width="1.1"/>
<path d="M19.0 16.1 V25.9 Q19.0 29.1 26 29.1 Q33.0 29.1 33.0 25.9 V16.1 Z" fill="#f7cd80" stroke="#d9962a" stroke-width="1"/>
<ellipse cx="26" cy="16.1" rx="7.0" ry="2.6" fill="#fbdc9c" stroke="#d9962a" stroke-width="1"/>
<path d="M19.0 19.700000000000003 Q19.0 23.1 26 23.1 Q33.0 23.1 33.0 19.700000000000003 M19.0 23.5 Q19.0 26.9 26 26.9 Q33.0 26.9 33.0 23.5" fill="none" stroke="#d9962a" stroke-width="1"/>
</svg>
<svg class="b" style="left:572px;top:172px;" width="32" height="36" viewBox="0 0 32 36">
<rect x="3.5" y="3.5" width="18" height="26" fill="#fff" stroke="#444" stroke-width="1.1"/>
<rect x="6.5" y="6.5" width="12" height="4.5" fill="#bdbdbd" stroke="#8a8a8a" stroke-width="0.8"/>
<g fill="#444"><rect x="6.5" y="14" width="2.6" height="2.6"/><rect x="11.2" y="14" width="2.6" height="2.6"/><rect x="15.9" y="14" width="2.6" height="2.6"/>
<rect x="6.5" y="18.5" width="2.6" height="2.6"/><rect x="11.2" y="18.5" width="2.6" height="2.6"/>
<rect x="6.5" y="23" width="2.6" height="2.6"/><rect x="11.2" y="23" width="2.6" height="2.6"/></g>
<path d="M15.2 20.1 V29.9 Q15.2 33.1 22.2 33.1 Q29.2 33.1 29.2 29.9 V20.1 Z" fill="#f7cd80" stroke="#d9962a" stroke-width="1"/>
<ellipse cx="22.2" cy="20.1" rx="7.0" ry="2.6" fill="#fbdc9c" stroke="#d9962a" stroke-width="1"/>
<path d="M15.2 23.700000000000003 Q15.2 27.1 22.2 27.1 Q29.2 27.1 29.2 23.700000000000003 M15.2 27.5 Q15.2 30.9 22.2 30.9 Q29.2 30.9 29.2 27.5" fill="none" stroke="#d9962a" stroke-width="1"/>
</svg>
<svg class="b" style="left:569px;top:221.5px;" width="33" height="30" viewBox="0 0 33 30">
<rect x="2.5" y="4" width="27.5" height="24.5" fill="#f6f6f6" stroke="#444" stroke-width="1"/>
<path d="M2.5 8.5 H30 M7.5 1.2 V6.5 M24.5 1.2 V6.5" stroke="#444" stroke-width="1"/>
<rect x="11" y="17" width="2" height="2" fill="#444"/>
</svg>
<svg class="b" style="left:569px;top:269.5px;" width="33" height="30" viewBox="0 0 33 30">
<rect x="2.5" y="4" width="27.5" height="24.5" fill="#f6f6f6" stroke="#444" stroke-width="1"/>
<path d="M2.5 8.5 H30 M7.5 1.2 V6.5 M24.5 1.2 V6.5" stroke="#444" stroke-width="1"/>
<rect x="11" y="17" width="2" height="2" fill="#444"/>
</svg>
<svg class="b" style="left:569px;top:316px;" width="32" height="32" viewBox="0 0 32 32"><circle cx="16" cy="16.3" r="13.6" fill="#f8f8f8" stroke="#444" stroke-width="1.1"/><path d="M16.5 8 V18.5 H23" fill="none" stroke="#444" stroke-width="1.1"/></svg>
<span class="t" id="t82" style="top:365.95px;font-size:32.8px;font-weight:200;color:#3d3d3d;font-family:'DejaVu Sans Light','DejaVu Sans',sans-serif;left:571.3px;transform:scaleX(0.8950);-webkit-text-stroke:0.3px #3d3d3d;">%</span>
<span class="t" id="t83" style="top:415.76px;font-size:16px;font-weight:200;color:#3d3d3d;font-family:'DejaVu Sans Light','DejaVu Sans',sans-serif;left:574.3px;transform:scaleX(0.7558);-webkit-text-stroke:0.3px #3d3d3d;">1</span>
<svg class="b" style="left:574px;top:414px;" width="24" height="28" viewBox="0 0 24 28"><path d="M4.2 25.9 L18.5 2.5" stroke="#4a4a4a" stroke-width="1.1"/></svg>
<span class="t" id="t84" style="top:427.46px;font-size:16px;font-weight:200;color:#3d3d3d;font-family:'DejaVu Sans Light','DejaVu Sans',sans-serif;left:586px;transform:scaleX(0.8834);-webkit-text-stroke:0.3px #3d3d3d;">2</span>
<span class="t" id="t85" style="top:464.93px;font-size:25.5px;font-weight:200;color:#3d3d3d;font-family:'DejaVu Sans Light','DejaVu Sans',sans-serif;left:568.6px;transform:scaleX(0.7580);-webkit-text-stroke:0.3px #3d3d3d;">10</span>
<span class="t" id="t86" style="top:462.60px;font-size:14.3px;font-weight:200;color:#3d3d3d;font-family:'DejaVu Sans Light','DejaVu Sans',sans-serif;left:592.5px;transform:scaleX(0.8563);-webkit-text-stroke:0.3px #3d3d3d;">2</span>
<span class="t" id="t87" style="top:510.25px;font-size:31.5px;font-weight:200;color:#3d3d3d;font-family:'DejaVu Sans Light','DejaVu Sans',sans-serif;left:569.2px;transform:scaleX(0.8089);-webkit-text-stroke:0.3px #3d3d3d;">ab</span>
<div class="b" style="left:751.5px;top:115.8px;width:16px;height:439px;background:#f1f1f1;"></div>
<svg class="b" style="left:754.5px;top:122px;" width="13" height="8" viewBox="0 0 13 8"><path d="M1 7 L6.5 1 L12 7 Z" fill="#6e6e6e"/></svg>
<div class="b" style="left:756px;top:207px;width:9.5px;height:347px;background:#7a7a7a;"></div>
</div>
<div class="sec" id="annotations">
<div class="b" style="left:50px;top:46.6px;width:138px;height:37.2px;border:5px solid #dc1e28;border-radius:13.5px;"></div>
<div class="b" style="left:671px;top:84px;width:41px;height:41.6px;border:5.1px solid #dc1e28;border-radius:11px;"></div>
<div class="b" style="left:424px;top:212.4px;width:125px;height:36.9px;border:5px solid #dc1e28;border-radius:14px;"></div>
<div class="b" style="left:551px;top:496.2px;width:211.5px;height:56.4px;border:4.4px solid #dc1e28;border-radius:26px 13px 15px 15px / 17px 13px 15px 15px;"></div>
</div>
</div></body></html>
